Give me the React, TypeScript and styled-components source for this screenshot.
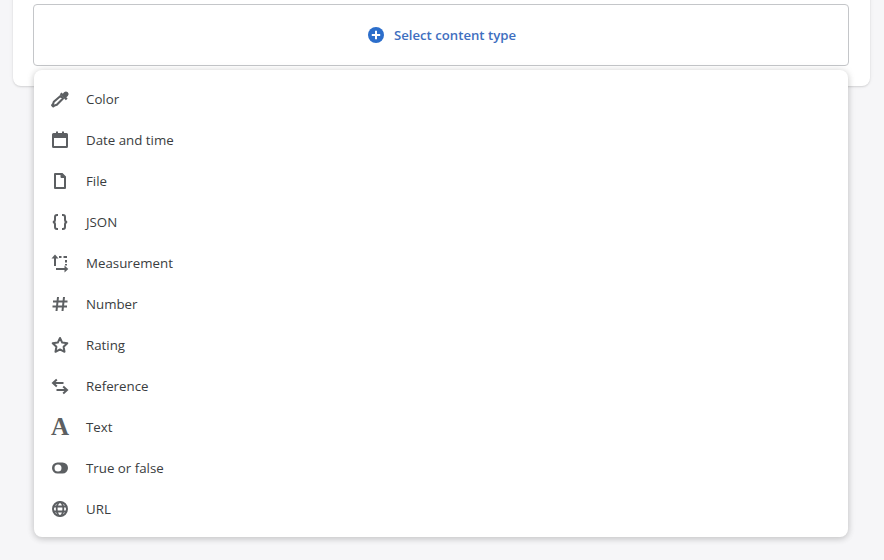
import React from 'react'
import styled, { createGlobalStyle } from 'styled-components'

const GlobalStyle = createGlobalStyle`
  html, body {
    margin: 0;
    height: 100%;
    overflow: hidden;
    background: #f6f6f8;
    font-family: "Open Sans", "Noto Sans", "Liberation Sans", sans-serif;
  }
`

const Page = styled.div`
  height: 560px;
  padding: 0 14px 0 13px;
  overflow: hidden;
`

const Card = styled.section`
  position: relative;
  margin-top: -16px;
  padding: 20px 21px 20px 20px;
  background: #fff;
  border-radius: 8px;
  box-shadow: 0 0 5px rgba(23, 24, 24, 0.05), 0 1px 2px rgba(0, 0, 0, 0.12);
`

const DropZone = styled.button`
  display: flex;
  align-items: center;
  justify-content: center;
  gap: 8px;
  box-sizing: border-box;
  width: 100%;
  height: 62px;
  padding: 0;
  background: #fff;
  border: 1px solid #c4c6c9;
  border-radius: 4px;
  font: inherit;
`

const DropLabel = styled.span`
  font-size: 13.2px;
  font-weight: 600;
  color: #3f6fc0;
`

const Popover = styled.ul`
  position: absolute;
  top: 86px;
  left: 21px;
  right: 22px;
  margin: 0;
  padding: 8px 0;
  list-style: none;
  background: #fff;
  border-radius: 8px;
  box-shadow: 0 0 8px rgba(23, 24, 24, 0.1), 0 2px 6px rgba(23, 24, 24, 0.16);
`

const Row = styled.li`
  display: flex;
  align-items: center;
  gap: 16px;
  height: 41px;
  padding-left: 16px;
  font-size: 13.3px;
  color: #3a3d40;
`

const IconBox = styled.span`
  display: flex;
  align-items: center;
  justify-content: center;
  width: 20px;
  height: 20px;
  color: #5c5f62;
`

const LetterIcon = styled.span`
  font-family: "Liberation Serif", serif;
  font-size: 25px;
  font-weight: 700;
  line-height: 20px;
`

const Svg: React.FC<{ children: React.ReactNode }> = ({ children }) => (
  <svg width={20} height={20} viewBox="0 0 20 20" fill="currentColor">
    {children}
  </svg>
)

const line = { fill: 'none', stroke: 'currentColor', strokeWidth: 2 }

const items: { label: string; icon: React.ReactNode }[] = [
  {
    label: 'Color',
    icon: (
      <Svg>
        <path d="M9.800 5.200l1.700-1.700 1.300 1.300 1.300-1.500a2.600 2.600 0 0 1 3.700 3.700l-1.500 1.300 1.300 1.300-1.700 1.700z" />
        <path d="M10.500 7l2.500 2.500-6.200 6.200-2.300.7-1.200 1-1.200-1.200 1-1.200.7-2.300z" fill="none" stroke="currentColor" strokeWidth={2.100} strokeLinejoin="round" />
      </Svg>
    ),
  },
  {
    label: 'Date and time',
    icon: (
      <Svg>
        <path d="M3.500 3H6V1.500h2V3h4V1.500h2V3h2.500A1.500 1.500 0 0 1 18 4.500v12a1.500 1.500 0 0 1-1.500 1.500h-13A1.500 1.500 0 0 1 2 16.500v-12A1.500 1.500 0 0 1 3.500 3zM4 8v8h12V8H4z" fillRule="evenodd" />
      </Svg>
    ),
  },
  {
    label: 'File',
    icon: (
      <Svg>
        <path d="M5 2h7.500L16 5.500V17a1 1 0 0 1-1 1H5a1 1 0 0 1-1-1V3a1 1 0 0 1 1-1zm1 2v12h8V7h-2.500a1 1 0 0 1-1-1V4H6z" fillRule="evenodd" />
      </Svg>
    ),
  },
  {
    label: 'JSON',
    icon: (
      <Svg>
        <path d="M8 3H7a2 2 0 0 0-2 2v2.500C5 9 4 10 2.800 10 4 10 5 11 5 12.500V15a2 2 0 0 0 2 2h1" {...line} />
        <path d="M12 3h1a2 2 0 0 1 2 2v2.500c0 1.500 1 2.500 2.200 2.500-1.200 0-2.200 1-2.200 2.500V15a2 2 0 0 1-2 2h-1" {...line} />
      </Svg>
    ),
  },
  {
    label: 'Measurement',
    icon: (
      <Svg>
        <path d="M5 1.500L8.500 5.500H6V13H4V5.500H1.500z" />
        <path d="M6 15h8.500v-2.500l3.800 3.500-3.800 3.500V17H6z" />
        <path d="M9 3h2.500v2H9zM13.500 3H17v2h-3.500zM15 7h2v2.500h-2zM15 11h2v1.500h-2z" />
      </Svg>
    ),
  },
  {
    label: 'Number',
    icon: (
      <Svg>
        <path d="M8 3L6.500 17M14 3l-1.500 14M3 7.500h14.500M2.500 12.500H17" {...line} />
      </Svg>
    ),
  },
  {
    label: 'Rating',
    icon: (
      <Svg>
        <path d="M10 3l2.200 4.600 5.100.7-3.700 3.500.9 5-4.500-2.400-4.500 2.400.9-5-3.700-3.500 5.100-.7z" {...line} strokeLinejoin="round" />
      </Svg>
    ),
  },
  {
    label: 'Reference',
    icon: (
      <Svg>
        <path d="M13.500 7H3.500M6.800 3.500L3 7l3.800 3.500" {...line} />
        <path d="M6.500 14h10M13.200 10.500L17 14l-3.800 3.500" {...line} />
      </Svg>
    ),
  },
  {
    label: 'Text',
    icon: <LetterIcon>A</LetterIcon>,
  },
  {
    label: 'True or false',
    icon: (
      <Svg>
        <path d="M7.500 4.500h5a5.500 5.500 0 0 1 0 11h-5a5.500 5.500 0 0 1 0-11zm.5 2a3.500 3.500 0 1 0 0 7 3.500 3.500 0 0 0 0-7z" fillRule="evenodd" />
      </Svg>
    ),
  },
  {
    label: 'URL',
    icon: (
      <Svg>
        <circle cx="10" cy="10" r="7" {...line} />
        <ellipse cx="10" cy="10" rx="3.300" ry="7" {...line} strokeWidth={1.8} />
        <path d="M3 7.500h14M3 12.500h14" {...line} strokeWidth={1.8} />
      </Svg>
    ),
  },
]

export default function App() {
  return (
    <Page>
      <GlobalStyle />
      <Card>
        <DropZone type="button">
          <svg width="20" height="20" viewBox="0 0 20 20">
            <circle cx="10" cy="10" r="8" fill="#2c6ecb" />
            <path d="M10 5.800v8.400M5.800 10h8.400" stroke="#fff" strokeWidth="2" />
          </svg>
          <DropLabel>Select content type</DropLabel>
        </DropZone>
        <Popover>
          {items.map((item) => (
            <Row key={item.label}>
              <IconBox>{item.icon}</IconBox>
              {item.label}
            </Row>
          ))}
        </Popover>
      </Card>
    </Page>
  )
}
